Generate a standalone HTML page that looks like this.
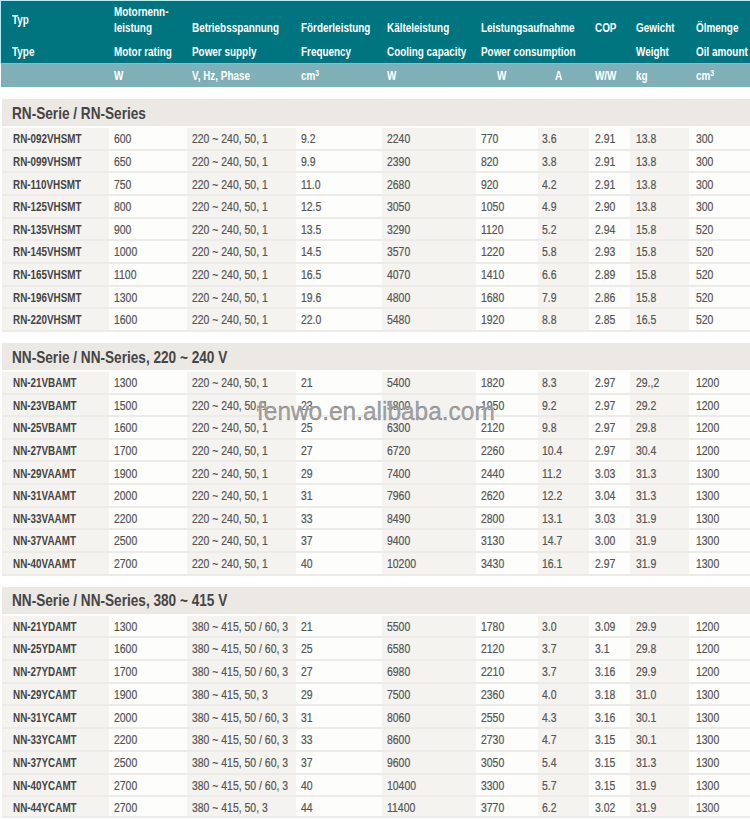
<!DOCTYPE html>
<html><head><meta charset="utf-8"><style>
html,body{margin:0;padding:0;background:#fff;width:750px;height:820px;overflow:hidden;position:relative}
body{font-family:"Liberation Sans",sans-serif}
.edge{position:absolute;left:0;top:0;width:750px;height:63px;background:#b5eef5}
.hd{position:absolute;left:1px;top:1px;width:749px;height:62px;background:#00757f;border-top:0}
.hl{position:absolute;left:1px;top:63px;width:749px;height:23.5px;background:#7fb0b8;border-top:1px solid #86bcc4;box-sizing:border-box}
.sec{position:absolute;left:2px;width:748px;background:#ece8e4}
.c{position:absolute}
.ws{position:absolute;left:2px;width:748px;height:2px;background:#fdfdfc}
.ln{position:absolute;left:2px;width:748px;height:2px;background:#edebe8}
.t{position:absolute;white-space:nowrap;transform-origin:0 0;height:0}
.t span{}
.h{font-weight:bold;color:#fff;font-size:13px;line-height:0;transform:scaleX(0.762)}
.d{color:#545454;font-size:12.5px;line-height:0;transform:scaleX(0.835);-webkit-text-stroke:0.2px #545454}
.db{font-weight:bold;color:#444;font-size:12.5px;line-height:0;transform:scaleX(0.79)}
.st{font-weight:bold;color:#454545;font-size:16.5px;line-height:0;transform:scaleX(0.825)}
sup{font-size:9px;vertical-align:0;position:relative;top:-4px}
.wm{position:absolute;left:257px;top:411px;font-size:26px;line-height:0;color:rgba(100,100,100,0.6);-webkit-text-stroke:0.5px rgba(100,100,100,0.6);white-space:nowrap;transform:scaleX(0.94);transform-origin:0 0;text-shadow:0 0 1px #fff,0 0 2px rgba(255,255,255,0.9)}
</style></head><body>
<div class="edge"></div><div class="hd"></div><div class="hl"></div><div class="t h" style="left:12px;top:19.50px">Typ</div><div class="t h" style="left:12px;top:51.50px">Type</div><div class="t h" style="left:113.5px;top:11.50px">Motornenn-</div><div class="t h" style="left:113.5px;top:27.50px">leistung</div><div class="t h" style="left:113.5px;top:51.50px">Motor rating</div><div class="t h" style="left:192px;top:27.50px">Betriebsspannung</div><div class="t h" style="left:192px;top:51.50px">Power supply</div><div class="t h" style="left:301px;top:27.50px">Förderleistung</div><div class="t h" style="left:301px;top:51.50px">Frequency</div><div class="t h" style="left:387px;top:27.50px">Kälteleistung</div><div class="t h" style="left:387px;top:51.50px">Cooling capacity</div><div class="t h" style="left:481px;top:27.50px">Leistungsaufnahme</div><div class="t h" style="left:481px;top:51.50px">Power consumption</div><div class="t h" style="left:595px;top:27.50px">COP</div><div class="t h" style="left:636px;top:27.50px">Gewicht</div><div class="t h" style="left:636px;top:51.50px">Weight</div><div class="t h" style="left:696px;top:27.50px">Ölmenge</div><div class="t h" style="left:696px;top:51.50px">Oil amount</div><div class="t h" style="left:114px;top:75.50px">W</div><div class="t h" style="left:192px;top:75.50px">V, Hz, Phase</div><div class="t h" style="left:301px;top:75.50px">cm<sup>3</sup></div><div class="t h" style="left:387px;top:75.50px">W</div><div class="t h" style="left:497px;top:75.50px">W</div><div class="t h" style="left:555px;top:75.50px">A</div><div class="t h" style="left:595px;top:75.50px">W/W</div><div class="t h" style="left:636px;top:75.50px">kg</div><div class="t h" style="left:696px;top:75.50px">cm<sup>3</sup></div><div class="sec" style="top:99px;height:27.80px"></div><div class="t st" style="left:12px;top:112.88px">RN-Serie / RN-Series</div><div class="c" style="left:2px;top:126.00px;width:107px;height:205.87px;background:#f5f3f0"></div><div class="c" style="left:109px;top:126.00px;width:78px;height:205.87px;background:#fdfdfc"></div><div class="c" style="left:187px;top:126.00px;width:109px;height:205.87px;background:#f5f3f0"></div><div class="c" style="left:296px;top:126.00px;width:86px;height:205.87px;background:#fdfdfc"></div><div class="c" style="left:382px;top:126.00px;width:94px;height:205.87px;background:#f5f3f0"></div><div class="c" style="left:476px;top:126.00px;width:62px;height:205.87px;background:#fdfdfc"></div><div class="c" style="left:538px;top:126.00px;width:51px;height:205.87px;background:#f5f3f0"></div><div class="c" style="left:589px;top:126.00px;width:41px;height:205.87px;background:#fdfdfc"></div><div class="c" style="left:630px;top:126.00px;width:59px;height:205.87px;background:#f5f3f0"></div><div class="c" style="left:689px;top:126.00px;width:61px;height:205.87px;background:#fdfdfc"></div><div class="ws" style="top:126px"></div><div class="ln" style="top:149px"></div><div class="t db" style="left:12.5px;top:139.27px">RN-092VHSMT</div><div class="t d" style="left:114px;top:139.27px">600</div><div class="t d" style="left:192px;top:139.27px">220 ~ 240, 50, 1</div><div class="t d" style="left:301px;top:139.27px">9.2</div><div class="t d" style="left:387px;top:139.27px">2240</div><div class="t d" style="left:481px;top:139.27px">770</div><div class="t d" style="left:542px;top:139.27px">3.6</div><div class="t d" style="left:595px;top:139.27px">2.91</div><div class="t d" style="left:636px;top:139.27px">13.8</div><div class="t d" style="left:696px;top:139.27px">300</div><div class="ln" style="top:171px"></div><div class="t db" style="left:12.5px;top:161.91px">RN-099VHSMT</div><div class="t d" style="left:114px;top:161.91px">650</div><div class="t d" style="left:192px;top:161.91px">220 ~ 240, 50, 1</div><div class="t d" style="left:301px;top:161.91px">9.9</div><div class="t d" style="left:387px;top:161.91px">2390</div><div class="t d" style="left:481px;top:161.91px">820</div><div class="t d" style="left:542px;top:161.91px">3.8</div><div class="t d" style="left:595px;top:161.91px">2.91</div><div class="t d" style="left:636px;top:161.91px">13.8</div><div class="t d" style="left:696px;top:161.91px">300</div><div class="ln" style="top:194px"></div><div class="t db" style="left:12.5px;top:184.55px">RN-110VHSMT</div><div class="t d" style="left:114px;top:184.55px">750</div><div class="t d" style="left:192px;top:184.55px">220 ~ 240, 50, 1</div><div class="t d" style="left:301px;top:184.55px">11.0</div><div class="t d" style="left:387px;top:184.55px">2680</div><div class="t d" style="left:481px;top:184.55px">920</div><div class="t d" style="left:542px;top:184.55px">4.2</div><div class="t d" style="left:595px;top:184.55px">2.91</div><div class="t d" style="left:636px;top:184.55px">13.8</div><div class="t d" style="left:696px;top:184.55px">300</div><div class="ln" style="top:217px"></div><div class="t db" style="left:12.5px;top:207.19px">RN-125VHSMT</div><div class="t d" style="left:114px;top:207.19px">800</div><div class="t d" style="left:192px;top:207.19px">220 ~ 240, 50, 1</div><div class="t d" style="left:301px;top:207.19px">12.5</div><div class="t d" style="left:387px;top:207.19px">3050</div><div class="t d" style="left:481px;top:207.19px">1050</div><div class="t d" style="left:542px;top:207.19px">4.9</div><div class="t d" style="left:595px;top:207.19px">2.90</div><div class="t d" style="left:636px;top:207.19px">13.8</div><div class="t d" style="left:696px;top:207.19px">300</div><div class="ln" style="top:239px"></div><div class="t db" style="left:12.5px;top:229.83px">RN-135VHSMT</div><div class="t d" style="left:114px;top:229.83px">900</div><div class="t d" style="left:192px;top:229.83px">220 ~ 240, 50, 1</div><div class="t d" style="left:301px;top:229.83px">13.5</div><div class="t d" style="left:387px;top:229.83px">3290</div><div class="t d" style="left:481px;top:229.83px">1120</div><div class="t d" style="left:542px;top:229.83px">5.2</div><div class="t d" style="left:595px;top:229.83px">2.94</div><div class="t d" style="left:636px;top:229.83px">15.8</div><div class="t d" style="left:696px;top:229.83px">520</div><div class="ln" style="top:262px"></div><div class="t db" style="left:12.5px;top:252.47px">RN-145VHSMT</div><div class="t d" style="left:114px;top:252.47px">1000</div><div class="t d" style="left:192px;top:252.47px">220 ~ 240, 50, 1</div><div class="t d" style="left:301px;top:252.47px">14.5</div><div class="t d" style="left:387px;top:252.47px">3570</div><div class="t d" style="left:481px;top:252.47px">1220</div><div class="t d" style="left:542px;top:252.47px">5.8</div><div class="t d" style="left:595px;top:252.47px">2.93</div><div class="t d" style="left:636px;top:252.47px">15.8</div><div class="t d" style="left:696px;top:252.47px">520</div><div class="ln" style="top:285px"></div><div class="t db" style="left:12.5px;top:275.11px">RN-165VHSMT</div><div class="t d" style="left:114px;top:275.11px">1100</div><div class="t d" style="left:192px;top:275.11px">220 ~ 240, 50, 1</div><div class="t d" style="left:301px;top:275.11px">16.5</div><div class="t d" style="left:387px;top:275.11px">4070</div><div class="t d" style="left:481px;top:275.11px">1410</div><div class="t d" style="left:542px;top:275.11px">6.6</div><div class="t d" style="left:595px;top:275.11px">2.89</div><div class="t d" style="left:636px;top:275.11px">15.8</div><div class="t d" style="left:696px;top:275.11px">520</div><div class="ln" style="top:307px"></div><div class="t db" style="left:12.5px;top:297.75px">RN-196VHSMT</div><div class="t d" style="left:114px;top:297.75px">1300</div><div class="t d" style="left:192px;top:297.75px">220 ~ 240, 50, 1</div><div class="t d" style="left:301px;top:297.75px">19.6</div><div class="t d" style="left:387px;top:297.75px">4800</div><div class="t d" style="left:481px;top:297.75px">1680</div><div class="t d" style="left:542px;top:297.75px">7.9</div><div class="t d" style="left:595px;top:297.75px">2.86</div><div class="t d" style="left:636px;top:297.75px">15.8</div><div class="t d" style="left:696px;top:297.75px">520</div><div class="ln" style="top:330px"></div><div class="t db" style="left:12.5px;top:320.39px">RN-220VHSMT</div><div class="t d" style="left:114px;top:320.39px">1600</div><div class="t d" style="left:192px;top:320.39px">220 ~ 240, 50, 1</div><div class="t d" style="left:301px;top:320.39px">22.0</div><div class="t d" style="left:387px;top:320.39px">5480</div><div class="t d" style="left:481px;top:320.39px">1920</div><div class="t d" style="left:542px;top:320.39px">8.8</div><div class="t d" style="left:595px;top:320.39px">2.85</div><div class="t d" style="left:636px;top:320.39px">16.5</div><div class="t d" style="left:696px;top:320.39px">520</div><div class="sec" style="top:342.75px;height:27.80px"></div><div class="t st" style="left:12px;top:356.63px">NN-Serie / NN-Series, 220 ~ 240 V</div><div class="c" style="left:2px;top:369.75px;width:107px;height:205.79px;background:#f5f3f0"></div><div class="c" style="left:109px;top:369.75px;width:78px;height:205.79px;background:#fdfdfc"></div><div class="c" style="left:187px;top:369.75px;width:109px;height:205.79px;background:#f5f3f0"></div><div class="c" style="left:296px;top:369.75px;width:86px;height:205.79px;background:#fdfdfc"></div><div class="c" style="left:382px;top:369.75px;width:94px;height:205.79px;background:#f5f3f0"></div><div class="c" style="left:476px;top:369.75px;width:62px;height:205.79px;background:#fdfdfc"></div><div class="c" style="left:538px;top:369.75px;width:51px;height:205.79px;background:#f5f3f0"></div><div class="c" style="left:589px;top:369.75px;width:41px;height:205.79px;background:#fdfdfc"></div><div class="c" style="left:630px;top:369.75px;width:59px;height:205.79px;background:#f5f3f0"></div><div class="c" style="left:689px;top:369.75px;width:61px;height:205.79px;background:#fdfdfc"></div><div class="ws" style="top:370px"></div><div class="ln" style="top:393px"></div><div class="t db" style="left:12.5px;top:383.02px">NN-21VBAMT</div><div class="t d" style="left:114px;top:383.02px">1300</div><div class="t d" style="left:192px;top:383.02px">220 ~ 240, 50, 1</div><div class="t d" style="left:301px;top:383.02px">21</div><div class="t d" style="left:387px;top:383.02px">5400</div><div class="t d" style="left:481px;top:383.02px">1820</div><div class="t d" style="left:542px;top:383.02px">8.3</div><div class="t d" style="left:595px;top:383.02px">2.97</div><div class="t d" style="left:636px;top:383.02px">29.,2</div><div class="t d" style="left:696px;top:383.02px">1200</div><div class="ln" style="top:415px"></div><div class="t db" style="left:12.5px;top:405.65px">NN-23VBAMT</div><div class="t d" style="left:114px;top:405.65px">1500</div><div class="t d" style="left:192px;top:405.65px">220 ~ 240, 50, 1</div><div class="t d" style="left:301px;top:405.65px">23</div><div class="t d" style="left:387px;top:405.65px">5800</div><div class="t d" style="left:481px;top:405.65px">1950</div><div class="t d" style="left:542px;top:405.65px">9.2</div><div class="t d" style="left:595px;top:405.65px">2.97</div><div class="t d" style="left:636px;top:405.65px">29.2</div><div class="t d" style="left:696px;top:405.65px">1200</div><div class="ln" style="top:438px"></div><div class="t db" style="left:12.5px;top:428.28px">NN-25VBAMT</div><div class="t d" style="left:114px;top:428.28px">1600</div><div class="t d" style="left:192px;top:428.28px">220 ~ 240, 50, 1</div><div class="t d" style="left:301px;top:428.28px">25</div><div class="t d" style="left:387px;top:428.28px">6300</div><div class="t d" style="left:481px;top:428.28px">2120</div><div class="t d" style="left:542px;top:428.28px">9.8</div><div class="t d" style="left:595px;top:428.28px">2.97</div><div class="t d" style="left:636px;top:428.28px">29.8</div><div class="t d" style="left:696px;top:428.28px">1200</div><div class="ln" style="top:460px"></div><div class="t db" style="left:12.5px;top:450.91px">NN-27VBAMT</div><div class="t d" style="left:114px;top:450.91px">1700</div><div class="t d" style="left:192px;top:450.91px">220 ~ 240, 50, 1</div><div class="t d" style="left:301px;top:450.91px">27</div><div class="t d" style="left:387px;top:450.91px">6720</div><div class="t d" style="left:481px;top:450.91px">2260</div><div class="t d" style="left:542px;top:450.91px">10.4</div><div class="t d" style="left:595px;top:450.91px">2.97</div><div class="t d" style="left:636px;top:450.91px">30.4</div><div class="t d" style="left:696px;top:450.91px">1200</div><div class="ln" style="top:483px"></div><div class="t db" style="left:12.5px;top:473.54px">NN-29VAAMT</div><div class="t d" style="left:114px;top:473.54px">1900</div><div class="t d" style="left:192px;top:473.54px">220 ~ 240, 50, 1</div><div class="t d" style="left:301px;top:473.54px">29</div><div class="t d" style="left:387px;top:473.54px">7400</div><div class="t d" style="left:481px;top:473.54px">2440</div><div class="t d" style="left:542px;top:473.54px">11.2</div><div class="t d" style="left:595px;top:473.54px">3.03</div><div class="t d" style="left:636px;top:473.54px">31.3</div><div class="t d" style="left:696px;top:473.54px">1300</div><div class="ln" style="top:506px"></div><div class="t db" style="left:12.5px;top:496.17px">NN-31VAAMT</div><div class="t d" style="left:114px;top:496.17px">2000</div><div class="t d" style="left:192px;top:496.17px">220 ~ 240, 50, 1</div><div class="t d" style="left:301px;top:496.17px">31</div><div class="t d" style="left:387px;top:496.17px">7960</div><div class="t d" style="left:481px;top:496.17px">2620</div><div class="t d" style="left:542px;top:496.17px">12.2</div><div class="t d" style="left:595px;top:496.17px">3.04</div><div class="t d" style="left:636px;top:496.17px">31.3</div><div class="t d" style="left:696px;top:496.17px">1300</div><div class="ln" style="top:528px"></div><div class="t db" style="left:12.5px;top:518.80px">NN-33VAAMT</div><div class="t d" style="left:114px;top:518.80px">2200</div><div class="t d" style="left:192px;top:518.80px">220 ~ 240, 50, 1</div><div class="t d" style="left:301px;top:518.80px">33</div><div class="t d" style="left:387px;top:518.80px">8490</div><div class="t d" style="left:481px;top:518.80px">2800</div><div class="t d" style="left:542px;top:518.80px">13.1</div><div class="t d" style="left:595px;top:518.80px">3.03</div><div class="t d" style="left:636px;top:518.80px">31.9</div><div class="t d" style="left:696px;top:518.80px">1300</div><div class="ln" style="top:551px"></div><div class="t db" style="left:12.5px;top:541.43px">NN-37VAAMT</div><div class="t d" style="left:114px;top:541.43px">2500</div><div class="t d" style="left:192px;top:541.43px">220 ~ 240, 50, 1</div><div class="t d" style="left:301px;top:541.43px">37</div><div class="t d" style="left:387px;top:541.43px">9400</div><div class="t d" style="left:481px;top:541.43px">3130</div><div class="t d" style="left:542px;top:541.43px">14.7</div><div class="t d" style="left:595px;top:541.43px">3.00</div><div class="t d" style="left:636px;top:541.43px">31.9</div><div class="t d" style="left:696px;top:541.43px">1300</div><div class="ln" style="top:574px"></div><div class="t db" style="left:12.5px;top:564.06px">NN-40VAAMT</div><div class="t d" style="left:114px;top:564.06px">2700</div><div class="t d" style="left:192px;top:564.06px">220 ~ 240, 50, 1</div><div class="t d" style="left:301px;top:564.06px">40</div><div class="t d" style="left:387px;top:564.06px">10200</div><div class="t d" style="left:481px;top:564.06px">3430</div><div class="t d" style="left:542px;top:564.06px">16.1</div><div class="t d" style="left:595px;top:564.06px">2.97</div><div class="t d" style="left:636px;top:564.06px">31.9</div><div class="t d" style="left:696px;top:564.06px">1300</div><div class="sec" style="top:586.5px;height:27.80px"></div><div class="t st" style="left:12px;top:600.38px">NN-Serie / NN-Series, 380 ~ 415 V</div><div class="c" style="left:2px;top:613.50px;width:107px;height:204.50px;background:#f5f3f0"></div><div class="c" style="left:109px;top:613.50px;width:78px;height:204.50px;background:#fdfdfc"></div><div class="c" style="left:187px;top:613.50px;width:109px;height:204.50px;background:#f5f3f0"></div><div class="c" style="left:296px;top:613.50px;width:86px;height:204.50px;background:#fdfdfc"></div><div class="c" style="left:382px;top:613.50px;width:94px;height:204.50px;background:#f5f3f0"></div><div class="c" style="left:476px;top:613.50px;width:62px;height:204.50px;background:#fdfdfc"></div><div class="c" style="left:538px;top:613.50px;width:51px;height:204.50px;background:#f5f3f0"></div><div class="c" style="left:589px;top:613.50px;width:41px;height:204.50px;background:#fdfdfc"></div><div class="c" style="left:630px;top:613.50px;width:59px;height:204.50px;background:#f5f3f0"></div><div class="c" style="left:689px;top:613.50px;width:61px;height:204.50px;background:#fdfdfc"></div><div class="ws" style="top:614px"></div><div class="ln" style="top:636px"></div><div class="t db" style="left:12.5px;top:626.77px">NN-21YDAMT</div><div class="t d" style="left:114px;top:626.77px">1300</div><div class="t d" style="left:192px;top:626.77px">380 ~ 415, 50 / 60, 3</div><div class="t d" style="left:301px;top:626.77px">21</div><div class="t d" style="left:387px;top:626.77px">5500</div><div class="t d" style="left:481px;top:626.77px">1780</div><div class="t d" style="left:542px;top:626.77px">3.0</div><div class="t d" style="left:595px;top:626.77px">3.09</div><div class="t d" style="left:636px;top:626.77px">29.9</div><div class="t d" style="left:696px;top:626.77px">1200</div><div class="ln" style="top:659px"></div><div class="t db" style="left:12.5px;top:649.47px">NN-25YDAMT</div><div class="t d" style="left:114px;top:649.47px">1600</div><div class="t d" style="left:192px;top:649.47px">380 ~ 415, 50 / 60, 3</div><div class="t d" style="left:301px;top:649.47px">25</div><div class="t d" style="left:387px;top:649.47px">6580</div><div class="t d" style="left:481px;top:649.47px">2120</div><div class="t d" style="left:542px;top:649.47px">3.7</div><div class="t d" style="left:595px;top:649.47px">3.1</div><div class="t d" style="left:636px;top:649.47px">29.8</div><div class="t d" style="left:696px;top:649.47px">1200</div><div class="ln" style="top:682px"></div><div class="t db" style="left:12.5px;top:672.17px">NN-27YDAMT</div><div class="t d" style="left:114px;top:672.17px">1700</div><div class="t d" style="left:192px;top:672.17px">380 ~ 415, 50 / 60, 3</div><div class="t d" style="left:301px;top:672.17px">27</div><div class="t d" style="left:387px;top:672.17px">6980</div><div class="t d" style="left:481px;top:672.17px">2210</div><div class="t d" style="left:542px;top:672.17px">3.7</div><div class="t d" style="left:595px;top:672.17px">3.16</div><div class="t d" style="left:636px;top:672.17px">29.9</div><div class="t d" style="left:696px;top:672.17px">1200</div><div class="ln" style="top:704px"></div><div class="t db" style="left:12.5px;top:694.87px">NN-29YCAMT</div><div class="t d" style="left:114px;top:694.87px">1900</div><div class="t d" style="left:192px;top:694.87px">380 ~ 415, 50, 3</div><div class="t d" style="left:301px;top:694.87px">29</div><div class="t d" style="left:387px;top:694.87px">7500</div><div class="t d" style="left:481px;top:694.87px">2360</div><div class="t d" style="left:542px;top:694.87px">4.0</div><div class="t d" style="left:595px;top:694.87px">3.18</div><div class="t d" style="left:636px;top:694.87px">31.0</div><div class="t d" style="left:696px;top:694.87px">1300</div><div class="ln" style="top:727px"></div><div class="t db" style="left:12.5px;top:717.57px">NN-31YCAMT</div><div class="t d" style="left:114px;top:717.57px">2000</div><div class="t d" style="left:192px;top:717.57px">380 ~ 415, 50 / 60, 3</div><div class="t d" style="left:301px;top:717.57px">31</div><div class="t d" style="left:387px;top:717.57px">8060</div><div class="t d" style="left:481px;top:717.57px">2550</div><div class="t d" style="left:542px;top:717.57px">4.3</div><div class="t d" style="left:595px;top:717.57px">3.16</div><div class="t d" style="left:636px;top:717.57px">30.1</div><div class="t d" style="left:696px;top:717.57px">1300</div><div class="ln" style="top:750px"></div><div class="t db" style="left:12.5px;top:740.27px">NN-33YCAMT</div><div class="t d" style="left:114px;top:740.27px">2200</div><div class="t d" style="left:192px;top:740.27px">380 ~ 415, 50 / 60, 3</div><div class="t d" style="left:301px;top:740.27px">33</div><div class="t d" style="left:387px;top:740.27px">8600</div><div class="t d" style="left:481px;top:740.27px">2730</div><div class="t d" style="left:542px;top:740.27px">4.7</div><div class="t d" style="left:595px;top:740.27px">3.15</div><div class="t d" style="left:636px;top:740.27px">30.1</div><div class="t d" style="left:696px;top:740.27px">1300</div><div class="ln" style="top:773px"></div><div class="t db" style="left:12.5px;top:762.97px">NN-37YCAMT</div><div class="t d" style="left:114px;top:762.97px">2500</div><div class="t d" style="left:192px;top:762.97px">380 ~ 415, 50 / 60, 3</div><div class="t d" style="left:301px;top:762.97px">37</div><div class="t d" style="left:387px;top:762.97px">9600</div><div class="t d" style="left:481px;top:762.97px">3050</div><div class="t d" style="left:542px;top:762.97px">5.4</div><div class="t d" style="left:595px;top:762.97px">3.15</div><div class="t d" style="left:636px;top:762.97px">31.3</div><div class="t d" style="left:696px;top:762.97px">1300</div><div class="ln" style="top:795px"></div><div class="t db" style="left:12.5px;top:785.67px">NN-40YCAMT</div><div class="t d" style="left:114px;top:785.67px">2700</div><div class="t d" style="left:192px;top:785.67px">380 ~ 415, 50 / 60, 3</div><div class="t d" style="left:301px;top:785.67px">40</div><div class="t d" style="left:387px;top:785.67px">10400</div><div class="t d" style="left:481px;top:785.67px">3300</div><div class="t d" style="left:542px;top:785.67px">5.7</div><div class="t d" style="left:595px;top:785.67px">3.15</div><div class="t d" style="left:636px;top:785.67px">31.9</div><div class="t d" style="left:696px;top:785.67px">1300</div><div class="ln" style="top:816px"></div><div class="t db" style="left:12.5px;top:808.37px">NN-44YCAMT</div><div class="t d" style="left:114px;top:808.37px">2700</div><div class="t d" style="left:192px;top:808.37px">380 ~ 415, 50, 3</div><div class="t d" style="left:301px;top:808.37px">44</div><div class="t d" style="left:387px;top:808.37px">11400</div><div class="t d" style="left:481px;top:808.37px">3770</div><div class="t d" style="left:542px;top:808.37px">6.2</div><div class="t d" style="left:595px;top:808.37px">3.02</div><div class="t d" style="left:636px;top:808.37px">31.9</div><div class="t d" style="left:696px;top:808.37px">1300</div>
<div style="position:absolute;left:0;top:818px;width:750px;height:2px;background:#fff"></div>
<div class="wm">fenwo.en.alibaba.com</div>
</body></html>
